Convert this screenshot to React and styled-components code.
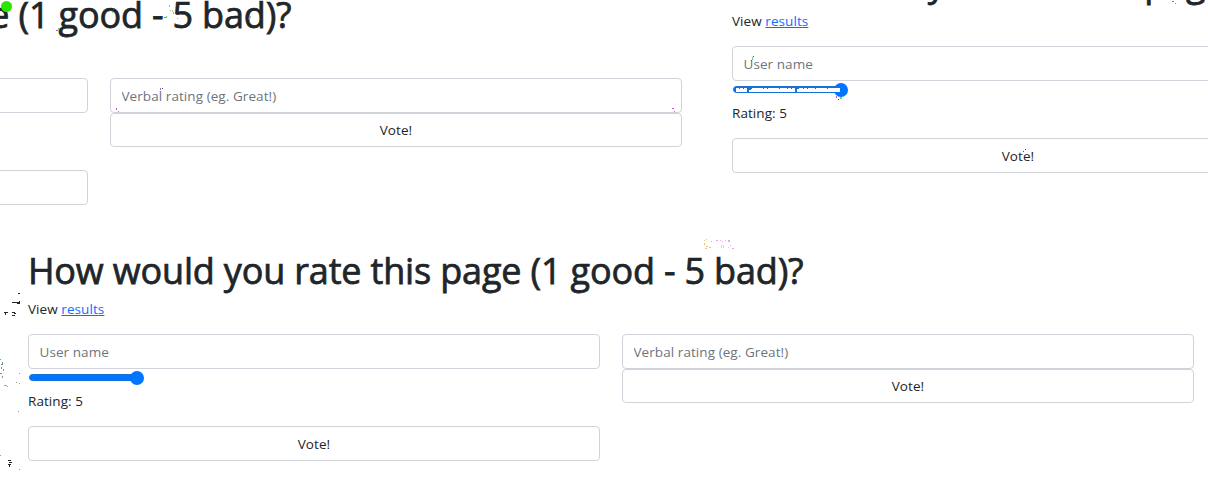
import React from "react";
import styled, { createGlobalStyle } from "styled-components";

const GlobalStyle = createGlobalStyle`
  *, *::before, *::after { box-sizing: border-box; }
  body {
    margin: 0;
    overflow: hidden;
    background: #fff;
    color: #212529;
    font: 400 13.5px/22px "Open Sans", "Noto Sans", sans-serif;
    letter-spacing: 0.07px;
  }
`;

const Page = styled.main`
  position: relative;
  display: flex;
  flex-direction: column;
  width: 1208px;
  height: 493px;
  overflow: hidden;
`;

const TopRow = styled.div`
  display: flex;
  height: 240px;
`;

const Pane = styled.section`
  flex: ${(p) => (p.$width ? `0 0 ${p.$width}px` : "1")};
  overflow: hidden;
`;

const Form = styled.div`
  width: 1208px;
  margin: ${(p) => p.$top}px 0 0 ${(p) => p.$left}px;
  padding: 0 14px 0 28px;
`;

const Title = styled.h1`
  margin: 0 0 7px;
  padding-top: 3px;
  font-size: 36px;
  font-weight: 500;
  line-height: 40px;
  letter-spacing: -0.17px;
  white-space: nowrap;
  -webkit-text-stroke: 0.75px currentColor;
`;

const Intro = styled.p`
  margin: 0 0 14px;
`;

const Link = styled.a`
  color: #0d6efd;
  text-decoration: underline;
`;

const Columns = styled.div`
  display: grid;
  grid-template-columns: 572px 572px;
  column-gap: 22px;
`;

const Column = styled.div`
  display: flex;
  flex-direction: column;
`;

const Field = styled.input`
  width: 100%;
  height: 35px;
  padding: 0 10.5px;
  border: 1px solid #ced4da;
  border-radius: 4px;
  background: #fff;
  color: #212529;
  font: inherit;
  letter-spacing: inherit;
  outline: 0;
  &::placeholder { color: #6c757d; opacity: 1; }
`;

const Vote = styled.button`
  width: 100%;
  height: ${(p) => p.$height}px;
  padding: 0;
  border: 1px solid #ced4da;
  border-radius: 4px;
  background: #fff;
  color: #212529;
  font: inherit;
  letter-spacing: inherit;
`;

const Slider = styled.div`
  display: flex;
  align-items: center;
  height: 17px;
  padding-left: 1px;
`;

const Track = styled.div`
  width: 108px;
  height: 7px;
  border: 1px solid #1a70d8;
  border-radius: 4px;
  background: #0075ff;
`;

const Thumb = styled.div`
  width: 14px;
  height: 14px;
  margin-left: -7px;
  border-radius: 50%;
  background: #0075ff;
`;

const Rating = styled.div`
  height: 40px;
  padding-top: 4px;
`;

const Overlay = styled.svg`
  position: absolute;
  inset: 0;
  pointer-events: none;
`;

function RatingForm({ top, left }) {
  return (
    <Form $top={top} $left={left}>
      <Title>How would you rate this page (1 good - 5 bad)?</Title>
      <Intro>View <Link>results</Link></Intro>
      <Columns>
        <Column>
          <Field placeholder="User name" />
          <Slider><Track /><Thumb /></Slider>
          <Rating>Rating: 5</Rating>
          <Vote $height={35}>Vote!</Vote>
        </Column>
        <Column>
          <Field placeholder="Verbal rating (eg. Great!)" />
          <Vote $height={34}>Vote!</Vote>
        </Column>
      </Columns>
    </Form>
  );
}

const specks = [
  ["#212529", "M18 293h2v1h-2zM16 302h4v1h-4zM12 302h4v1h-4zM17 303h3v1h-3zM19 301h1v1h-1zM4 312h4v1h-4zM5 313h1v2h-1zM12 312h3v1h-3zM14 313h2v1h-2zM12 315h3v1h-3zM8 460h3v1h-3zM9 462h3v1h-3zM8 464h3v1h-3zM9 465h1v2h-1z"],
  ["#7799aa", "M0 359h1v1h-1zM2 362h1v3h-1zM1 367h1v2h-1zM3 369h1v2h-1zM0 373h2v1h-2zM2 376h1v2h-1zM1 364h1v1h-1z"],
  ["#6bb8ff", "M4 385h3v1h-3zM7 386h1v1h-1z"],
  ["#9a9a9a", "M16 382h1v1h-1zM19 383h1v1h-1zM19 373h1v1h-1zM18 411h1v1h-1zM0 455h1v1h-1zM19 469h1v1h-1zM118 111h1v1h-1zM674 111h1v1h-1z"],
  ["#c34fdb", "M56 30h2v1h-2zM164 17h2v1h-2zM248 18h2v1h-2zM160 88h1v2h-1zM116 108h1v2h-1zM672 108h2v1h-2zM1172 1h2v1h-2zM1175 3h1v1h-1zM836 96h1v2h-1z"],
  ["#63d878", "M169 5h1v2h-1zM170 10h1v1h-1zM173 12h1v2h-1zM177 18h1v1h-1zM166 16h1v2h-1zM250 16h1v2h-1zM58 28h1v2h-1zM752 57h1v3h-1zM840 97h2v2h-2zM112 12h1v1h-1z"],
  ["#30586a", "M753 56h1v1h-1zM751 60h1v1h-1zM113 8h1v2h-1zM1025 149h1v1h-1zM1023 151h1v1h-1zM838 99h1v1h-1zM162 88h1v1h-1z"],
  ["#ecc080", "M704 240h1v1h-1zM706 239h1v1h-1zM704 243h1v2h-1zM706 246h2v1h-2zM705 248h2v1h-2zM709 247h2v1h-2zM725 240h1v1h-1zM730 245h1v1h-1zM172 10h1v2h-1z"],
  ["#e9a0e5", "M711 241h1v1h-1zM716 240h2v1h-2zM720 240h1v1h-1zM722 241h1v1h-1zM728 240h2v2h-2zM732 248h2v1h-2z"],
  ["#9eeced", "M721 245h1v3h-1zM723 245h1v3h-1zM728 247h1v1h-1z"],
];

export default function App() {
  return (
    <>
      <GlobalStyle />
      <Page>
        <TopRow>
          <Pane $width={704}>
            <RatingForm top={-8} left={-512} />
          </Pane>
          <Pane $width={504}>
            <RatingForm top={-40} left={0} />
          </Pane>
        </TopRow>
        <Pane>
          <RatingForm top={8} left={0} />
        </Pane>
        <Overlay width="1208" height="493" shapeRendering="crispEdges">
          <circle cx="6.5" cy="6.5" r="5.5" fill="#28e600" shapeRendering="auto" />
          <path fill="#fff" d="M736 88h104v4h-104z" />
          <path fill="#1a70d8" d="M747 87h5v2h-1v1h-2v2h-2zM795 87h4v2h-2v3h-2zM739 88h1v1h-1zM743 88h1v1h-1zM763 88h1v1h-1zM767 88h1v1h-1zM779 88h1v1h-1zM787 88h1v1h-1zM791 88h1v1h-1zM803 88h1v1h-1zM807 88h1v1h-1zM815 88h1v1h-1zM827 88h1v1h-1z" />
          {specks.map(([fill, d]) => <path key={fill} fill={fill} d={d} />)}
        </Overlay>
      </Page>
    </>
  );
}
